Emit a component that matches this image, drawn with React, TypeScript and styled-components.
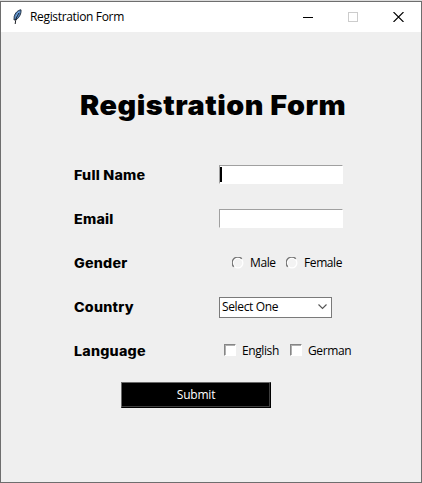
import React from "react";
import styled, { createGlobalStyle } from "styled-components";

const GlobalStyle = createGlobalStyle`
  * { box-sizing: border-box; }
  body { margin: 0; background: #efefef; overflow: hidden; }
`;

const Window = styled.main`
  width: 422px;
  height: 483px;
  display: flex;
  flex-direction: column;
  background: #efefef;
  border: 1px solid #6e6e6e;
  border-top: 0;
  color: #000;
  font: 12px/16px "Open Sans", "Noto Sans", sans-serif;
  white-space: nowrap;
`;

const TopEdge = styled.div`
  height: 2px;
  flex: none;
  margin: 0 -1px;
  background: #dcdcdc;
  border-bottom: 1px solid #6e6e6e;
`;

const TitleBar = styled.header`
  height: 30px;
  flex: none;
  display: flex;
  align-items: center;
  padding-left: 10px;
  background: #fff;
`;

const WindowTitle = styled.span`
  flex: 1;
  margin-left: 7px;
  letter-spacing: -0.34px;
`;

const WindowControls = styled.div`
  display: flex;
  gap: 35px;
  padding-right: 17px;
`;

const Icon = styled.svg`
  display: block;
  flex: none;
`;

const Heading = styled.h1`
  width: 250px;
  margin: 57px 0 0 79px;
  height: 34px;
  font: 900 27px/34px Inter, "Liberation Sans", sans-serif;
  letter-spacing: 0.5px;
  transform: scaleX(1.066);
  transform-origin: left;
`;

const Form = styled.form`
  margin-top: 30px;
  display: flex;
  flex-direction: column;
`;

const Row = styled.div`
  height: 44px;
  display: grid;
  grid-template-columns: 145px 1fr;
  align-items: center;
  padding-left: 73px;
`;

const Label = styled.span`
  font: 800 13px/18px Inter, "Liberation Sans", sans-serif;
  letter-spacing: 0.2px;
  transform: scaleX(1.1);
  transform-origin: left;
`;

const Entry = styled.div`
  width: 124px;
  height: 19px;
  margin-bottom: 2px;
  background: #fff;
  border: 1px solid #fff;
  border-top-color: #a0a0a0;
  border-left-color: #a0a0a0;
  padding-top: 1px;
`;

const Caret = styled.div`
  width: 2px;
  height: 15px;
  background: #000;
`;

const Choices = styled.div<{ $indent: number; $gap: number }>`
  display: flex;
  gap: ${(p) => p.$gap}px;
  padding-left: ${(p) => p.$indent}px;
`;

const Choice = styled.label<{ $width: number }>`
  display: flex;
  align-items: center;
  gap: 6px;
  width: ${(p) => p.$width}px;
  letter-spacing: -0.4px;
`;

const Checkbox = styled.span`
  width: 12px;
  height: 12px;
  margin-bottom: 2px;
  background: #fff;
  border: 1px solid #fff;
  border-top-color: #868686;
  border-left-color: #868686;
  box-shadow: inset 1px 1px #b0b0b0;
`;

const Combo = styled.div`
  width: 113px;
  height: 21px;
  display: flex;
  align-items: center;
  justify-content: space-between;
  padding: 0 4px 0 2px;
  background: #fff;
  border: 1px solid #7a7a7a;
  letter-spacing: -0.35px;
`;

const Submit = styled.button`
  width: 150px;
  height: 26px;
  margin: 9px 0 0 120px;
  padding: 0;
  color: #fff;
  background: #000;
  border: 1px solid #000;
  border-top-color: #696969;
  border-left-color: #696969;
  box-shadow: inset -1px -1px #3f3f3f;
  font: inherit;
  letter-spacing: -0.2px;
`;

const Feather = () => (
  <Icon width="12" height="16" viewBox="0 0 12 16">
    <path d="M10 .8C7 1 4 4 3.2 7.5L3 11l2.2-.3C8.2 8.8 10.5 4.5 10 .8Z" fill="#5585bd" stroke="#1c2838" strokeWidth=".9" />
    <path d="M8.4 2.2C6.6 3.5 5 6 4.5 8.5 6.8 6.8 8 4.6 8.4 2.2Z" fill="#86b8ee" />
    <path d="M8 4C5.8 7 4.6 10 4.2 15" fill="none" stroke="#05080d" strokeWidth=".9" />
  </Icon>
);

const Radio = () => (
  <Icon width="12" height="13" viewBox="0 0 12 13">
    <circle cx="6" cy="6" r="5.5" fill="#fff" />
    <circle cx="6" cy="6" r="4.2" fill="#f3f3f3" />
    <path d="M1.8 9.8A5.3 5.3 0 0 1 9.8 1.8" fill="none" stroke="#777" strokeWidth="1.4" />
  </Icon>
);

export default function App() {
  return (
    <>
      <GlobalStyle />
      <Window>
        <TopEdge />
        <TitleBar>
          <Feather />
          <WindowTitle>Registration Form</WindowTitle>
          <WindowControls>
            <Icon width="10" height="10" shapeRendering="crispEdges"><path d="M0 5.5H10" stroke="#000" /></Icon>
            <Icon width="10" height="10" shapeRendering="crispEdges"><path d="M.5.5h9v9h-9Z" fill="none" stroke="#ccc" /></Icon>
            <Icon width="11" height="10"><path d="m.5 0 10 10m0-10-10 10" stroke="#000" strokeWidth="1.1" /></Icon>
          </WindowControls>
        </TitleBar>
        <Heading>Registration Form</Heading>
        <Form>
          <Row><Label>Full Name</Label><Entry><Caret /></Entry></Row>
          <Row><Label>Email</Label><Entry /></Row>
          <Row>
            <Label>Gender</Label>
            <Choices $indent={13} $gap={9}>
              <Choice $width={45}><Radio />Male</Choice>
              <Choice $width={58}><Radio />Female</Choice>
            </Choices>
          </Row>
          <Row>
            <Label>Country</Label>
            <Combo>
              Select One
              <Icon width="9" height="6"><path d="m.5.5 4 4 4-4" fill="none" stroke="#555" strokeWidth="1.1" /></Icon>
            </Combo>
          </Row>
          <Row>
            <Label>Language</Label>
            <Choices $indent={5} $gap={9}>
              <Choice $width={57}><Checkbox />English</Choice>
              <Choice $width={62}><Checkbox />German</Choice>
            </Choices>
          </Row>
          <Submit type="button">Submit</Submit>
        </Form>
      </Window>
    </>
  );
}
